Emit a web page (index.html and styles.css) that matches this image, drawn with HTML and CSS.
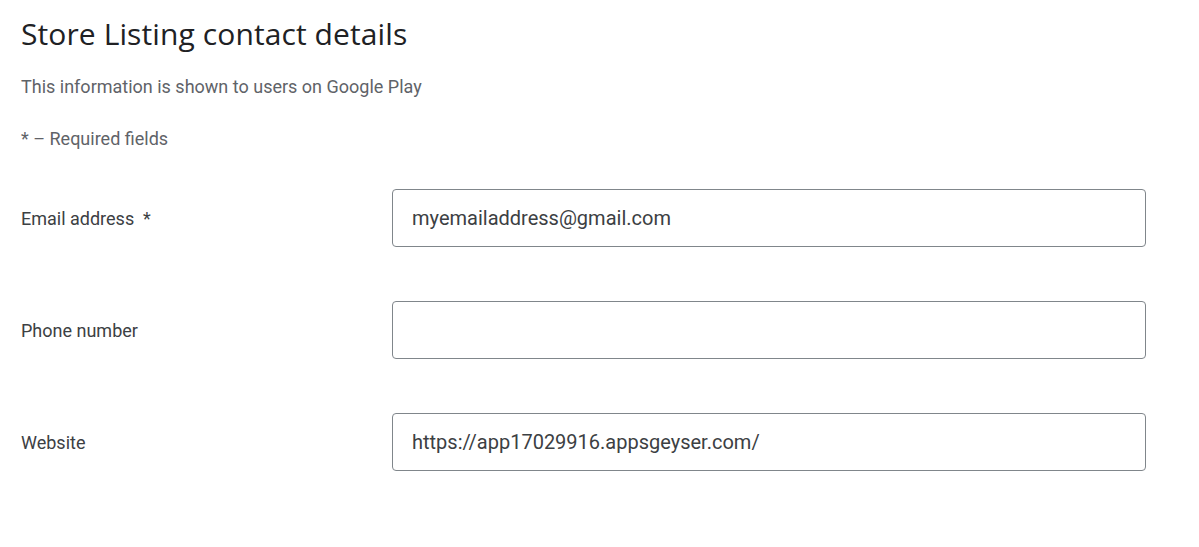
FILE: index.html
```html
<!DOCTYPE html>
<html>
<head>
<meta charset="utf-8">
<link rel="stylesheet" href="styles.css">
</head>
<body>
<div class="page">
  <h1 class="title">Store Listing contact details</h1>
  <p class="sub">This information is shown to users on Google Play</p>
  <p class="req">* – Required fields</p>
  <div class="rows">
    <div class="row">
      <div class="label">Email address&nbsp; *</div>
      <div class="field">myemailaddress@gmail.com</div>
    </div>
    <div class="row">
      <div class="label">Phone number</div>
      <div class="field"></div>
    </div>
    <div class="row">
      <div class="label">Website</div>
      <div class="field">https://app17029916.appsgeyser.com/</div>
    </div>
  </div>
</div>
</body>
</html>
```

FILE: styles.css
```css
html, body { margin: 0; padding: 0; background: #fff; }
.page { padding: 14px 0 0 21px; font-family: Roboto, "Noto Sans", sans-serif; }
.title { margin: 0; font-family: "Open Sans", sans-serif; font-weight: 500; font-size: 30px; line-height: 40px; color: #202124; letter-spacing: 0.1px; }
.sub { margin: 20px 0 0; font-size: 18px; line-height: 26px; color: #5f6368; }
.req { margin: 26px 0 0; font-size: 18px; line-height: 26px; color: #5f6368; }
.rows { margin-top: 37px; display: flex; flex-direction: column; gap: 54px; }
.row { display: flex; align-items: center; }
.label { width: 371px; font-size: 18px; color: #3c4043; }
.field { width: 754px; height: 58px; box-sizing: border-box; border: 1px solid #80868b; border-radius: 4px; padding: 0 0 0 19px; font-size: 20px; color: #3c4043; display: flex; align-items: center; }
```
